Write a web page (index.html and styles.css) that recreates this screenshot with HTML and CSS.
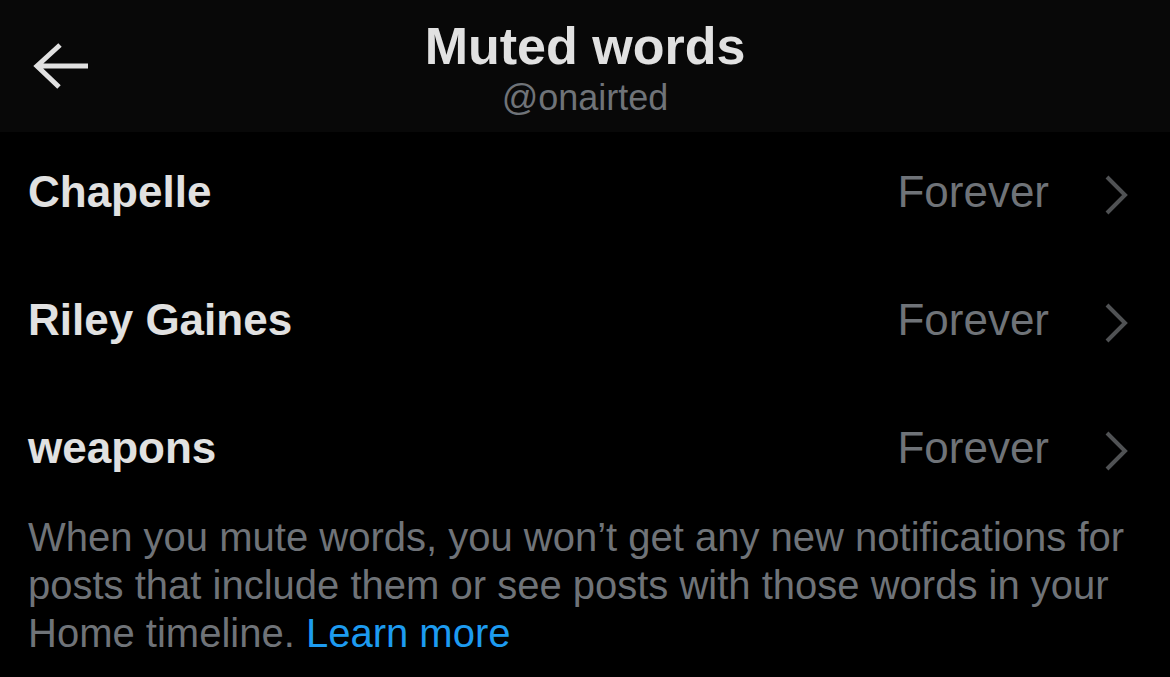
FILE: index.html
```html
<!DOCTYPE html>
<html lang="en">
<head>
    <meta charset="UTF-8">
    <meta name="viewport" content="width=device-width, initial-scale=1.0">
    <title>Muted words</title>
    <link rel="stylesheet" href="styles.css">
</head>
<body>
    <header class="top-bar">
        <div class="back">
            <svg class="back-icon" width="56" height="48" viewBox="0 0 56 48">
                <path d="M55 24H4M27 3L4 24l22 21" />
            </svg>
        </div>
        <div class="title-block">
            <h1>Muted words</h1>
            <div class="handle">@onairted</div>
        </div>
        <div></div>
    </header>

    <ul class="word-list">
        <li class="word-row">
            <span class="word">Chapelle</span>
            <span class="duration">Forever
                <svg class="chevron" width="24" height="40" viewBox="0 0 24 40"><path d="M3 2l18 18L3 38" /></svg>
            </span>
        </li>
        <li class="word-row">
            <span class="word">Riley Gaines</span>
            <span class="duration">Forever
                <svg class="chevron" width="24" height="40" viewBox="0 0 24 40"><path d="M3 2l18 18L3 38" /></svg>
            </span>
        </li>
        <li class="word-row">
            <span class="word">weapons</span>
            <span class="duration">Forever
                <svg class="chevron" width="24" height="40" viewBox="0 0 24 40"><path d="M3 2l18 18L3 38" /></svg>
            </span>
        </li>
    </ul>

    <p class="note">
        <span>When you mute words, you won’t get any new notifications for posts that include them or see posts with those words in your Home timeline.</span> <a href="#">Learn more</a>
    </p>
</body>
</html>
```

FILE: styles.css
```css
:root {
    --bg: #000000;
    --bar-bg: #080808;
    --text: #e1e1e1;
    --muted: #6f7378;
    --chevron: #505254;
    --link: #1d9bf0;
}
body {
    font-family: 'Liberation Sans', Arial, sans-serif;
    background-color: var(--bg);
    color: var(--text);
    margin: 0;
    width: 1170px;
    height: 677px;
    overflow: hidden;
}
.top-bar {
    display: grid;
    grid-template-columns: 1fr auto 1fr;
    align-items: center;
    height: 132px;
    background-color: var(--bar-bg);
}
.back {
    padding-left: 33px;
    display: flex;
    align-items: center;
}
.back-icon {
    display: block;
    fill: none;
    stroke: var(--text);
    stroke-width: 5;
    stroke-linejoin: miter;
}
.title-block {
    display: flex;
    flex-direction: column;
    align-items: center;
    gap: 4px;
    padding-top: 4px;
}
h1 {
    margin: 0;
    font-size: 52px;
    line-height: 56px;
    font-weight: 700;
}
.handle {
    font-size: 36px;
    line-height: 40px;
    color: var(--muted);
}
.word-list {
    list-style: none;
    margin: 0;
    padding: 0;
}
.word-row {
    display: flex;
    align-items: center;
    justify-content: space-between;
    height: 120px;
    padding: 0 42px 8px 28px;
    font-size: 44px;
}
.word {
    font-weight: 700;
}
.duration {
    display: flex;
    align-items: center;
    gap: 55px;
    color: var(--muted);
}
.chevron {
    display: block;
    fill: none;
    stroke: var(--chevron);
    stroke-width: 4;
    margin-top: 6px;
}
.note {
    margin: -3px 0 0;
    padding: 0 28px;
    font-size: 40px;
    line-height: 48px;
    color: var(--muted);
}
.note a {
    color: var(--link);
    text-decoration: none;
}
```
